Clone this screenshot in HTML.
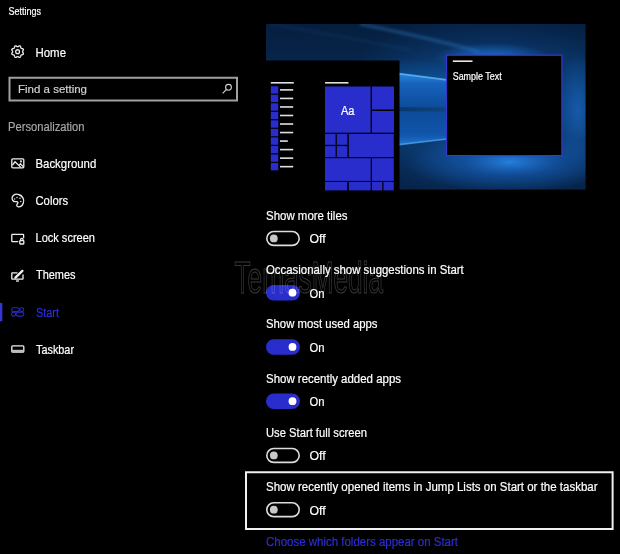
<!DOCTYPE html>
<html><head><meta charset="utf-8">
<style>
html,body{margin:0;padding:0;background:#000;width:620px;height:554px;overflow:hidden}
svg{display:block;will-change:transform}
text{font-family:"Liberation Sans",sans-serif;fill:#fff;stroke:#fff;stroke-width:0.2}
</style></head><body>
<svg width="620" height="554" viewBox="0 0 620 554">
<defs>
  <linearGradient id="wpbase" x1="0" y1="0" x2="0" y2="1">
    <stop offset="0" stop-color="#061f42"/>
    <stop offset="0.35" stop-color="#0a3268"/>
    <stop offset="0.65" stop-color="#0a3670"/>
    <stop offset="1" stop-color="#05214a"/>
  </linearGradient>
  <radialGradient id="glowtop" cx="0.5" cy="0.5" r="0.5">
    <stop offset="0" stop-color="#1f78e0" stop-opacity="0.85"/>
    <stop offset="1" stop-color="#1f78e0" stop-opacity="0"/>
  </radialGradient>
  <radialGradient id="glowbot" cx="0.5" cy="0.5" r="0.5">
    <stop offset="0" stop-color="#2a8cf0" stop-opacity="0.85"/>
    <stop offset="0.45" stop-color="#1a6ad0" stop-opacity="0.45"/>
    <stop offset="1" stop-color="#1a6ad0" stop-opacity="0"/>
  </radialGradient>
  <linearGradient id="rstrip" x1="0" y1="0" x2="0" y2="1">
    <stop offset="0" stop-color="#0c3c80" stop-opacity="0"/>
    <stop offset="0.5" stop-color="#1456a8" stop-opacity="0.6"/>
    <stop offset="1" stop-color="#0c3c80" stop-opacity="0"/>
  </linearGradient>
  <linearGradient id="pane1" x1="0" y1="0" x2="0" y2="1">
    <stop offset="0" stop-color="#2a86dc"/>
    <stop offset="0.3" stop-color="#1662bc"/>
    <stop offset="1" stop-color="#0d4c9c"/>
  </linearGradient>
  <linearGradient id="pane2" x1="0" y1="0" x2="0" y2="1">
    <stop offset="0" stop-color="#0d4a98"/>
    <stop offset="0.7" stop-color="#1056ac"/>
    <stop offset="1" stop-color="#2276cc"/>
  </linearGradient>
  <filter id="blur1" x="-20%" y="-50%" width="140%" height="200%"><feGaussianBlur stdDeviation="0.6"/></filter>
  <filter id="blur2" x="-20%" y="-100%" width="140%" height="300%"><feGaussianBlur stdDeviation="1.5"/></filter>
  <radialGradient id="midglow" cx="0.5" cy="0.5" r="0.5">
    <stop offset="0" stop-color="#1464b0" stop-opacity="0.75"/>
    <stop offset="0.6" stop-color="#0f4e96" stop-opacity="0.45"/>
    <stop offset="1" stop-color="#0f4e96" stop-opacity="0"/>
  </radialGradient>
  <linearGradient id="topdark" x1="0" y1="0" x2="0" y2="1">
    <stop offset="0" stop-color="#020c1e" stop-opacity="0.3"/>
    <stop offset="1" stop-color="#020c1e" stop-opacity="0"/>
  </linearGradient>
  <linearGradient id="botdark" x1="0" y1="0" x2="0" y2="1">
    <stop offset="0" stop-color="#031430" stop-opacity="0"/>
    <stop offset="1" stop-color="#031430" stop-opacity="0.3"/>
  </linearGradient>
  <linearGradient id="abovepane" x1="0" y1="0" x2="0" y2="1">
    <stop offset="0" stop-color="#0a4a8a" stop-opacity="0"/>
    <stop offset="1" stop-color="#0c5298" stop-opacity="0.9"/>
  </linearGradient>
  <clipPath id="wpclip"><rect x="266" y="24" width="319.5" height="165.5"/></clipPath>
</defs>
<rect width="620" height="554" fill="#000"/>

<!-- ===== LEFT NAV ===== -->
<text x="8.4" y="14.5" font-size="10" textLength="32.5" lengthAdjust="spacingAndGlyphs">Settings</text>

<!-- gear -->
<g fill="none" stroke="#ececec" stroke-width="1.3">
  <path d="M17.60 46.72 L17.86 46.68 L18.13 46.57 L18.43 46.39 L18.77 46.13 L19.13 45.96 L19.48 45.88 L19.81 45.90 L20.10 46.02 L20.35 46.24 L20.55 46.55 L20.67 46.92 L20.73 47.34 L20.82 47.68 L20.93 47.95 L21.09 48.16 L21.30 48.32 L21.57 48.43 L21.91 48.52 L22.33 48.58 L22.70 48.70 L23.01 48.90 L23.23 49.15 L23.35 49.44 L23.37 49.77 L23.29 50.12 L23.12 50.48 L22.86 50.82 L22.68 51.12 L22.57 51.39 L22.53 51.65 L22.57 51.91 L22.68 52.18 L22.86 52.48 L23.12 52.82 L23.29 53.18 L23.37 53.53 L23.35 53.86 L23.23 54.15 L23.01 54.40 L22.70 54.60 L22.33 54.72 L21.91 54.78 L21.57 54.87 L21.30 54.98 L21.09 55.14 L20.93 55.35 L20.82 55.62 L20.73 55.96 L20.67 56.38 L20.55 56.75 L20.35 57.06 L20.10 57.28 L19.81 57.40 L19.48 57.42 L19.13 57.34 L18.77 57.17 L18.43 56.91 L18.13 56.73 L17.86 56.62 L17.60 56.58 L17.34 56.62 L17.07 56.73 L16.77 56.91 L16.43 57.17 L16.07 57.34 L15.72 57.42 L15.39 57.40 L15.10 57.28 L14.85 57.06 L14.65 56.75 L14.53 56.38 L14.47 55.96 L14.38 55.62 L14.27 55.35 L14.11 55.14 L13.90 54.98 L13.63 54.87 L13.29 54.78 L12.87 54.72 L12.50 54.60 L12.19 54.40 L11.97 54.15 L11.85 53.86 L11.83 53.53 L11.91 53.18 L12.08 52.82 L12.34 52.48 L12.52 52.18 L12.63 51.91 L12.67 51.65 L12.63 51.39 L12.52 51.12 L12.34 50.82 L12.08 50.48 L11.91 50.12 L11.83 49.77 L11.85 49.44 L11.97 49.15 L12.19 48.90 L12.50 48.70 L12.87 48.58 L13.29 48.52 L13.63 48.43 L13.90 48.32 L14.11 48.16 L14.27 47.95 L14.38 47.68 L14.47 47.34 L14.53 46.92 L14.65 46.55 L14.85 46.24 L15.10 46.02 L15.39 45.90 L15.72 45.88 L16.07 45.96 L16.43 46.13 L16.77 46.39 L17.07 46.57 L17.34 46.68Z"/>
  <circle cx="17.6" cy="51.65" r="1.9"/>
</g>
<text x="35.5" y="56.6" font-size="12.9" textLength="30.5" lengthAdjust="spacingAndGlyphs">Home</text>

<!-- search -->
<rect x="9.5" y="77.75" width="227.5" height="22.75" fill="none" stroke="#a0a0a0" stroke-width="2"/>
<text x="18" y="93" font-size="11.5" style="fill:#d0d0d0;stroke:#d0d0d0" textLength="69" lengthAdjust="spacingAndGlyphs">Find a setting</text>
<g fill="none" stroke="#d0d0d0" stroke-width="1.1">
  <circle cx="228.5" cy="87.3" r="2.9"/>
  <path d="M226.4 89.5 L222.6 93.3"/>
</g>

<text x="8" y="131" font-size="12.5" style="fill:#a6a6a6;stroke:#a6a6a6" textLength="76.5" lengthAdjust="spacingAndGlyphs">Personalization</text>

<!-- background icon -->
<g fill="none" stroke="#f0f0f0" stroke-width="1.3">
  <rect x="11.8" y="158.8" width="12" height="9" rx="1"/>
  <path d="M12.5 165.2 L15 161.8 L20.8 167.4 M19 165.6 L20.4 163.8 L23.2 166.6"/>
  <circle cx="21" cy="161.4" r=".4"/>
</g>
<text x="35.5" y="167.60" font-size="12.9" textLength="60.75" lengthAdjust="spacingAndGlyphs">Background</text>

<!-- colors icon -->
<g fill="none" stroke="#f0f0f0" stroke-width="1.3">
  <path d="M16.2 201.6 C13 202.2 11.6 199.5 12.2 197.3 C13.2 194.2 16.6 193.7 18.6 194.5 C22.6 195.6 24.6 199.6 23.3 203 C22.4 205.6 20.2 207.1 18.3 206.9 C16.2 206.6 16.5 204.6 17.6 203.6 C18.4 202.6 17.7 201.3 16.2 201.6 Z"/>
</g>
<g fill="#e6e6e6">
  <circle cx="17" cy="197.5" r=".75"/><circle cx="20" cy="198.3" r=".75"/>
  <circle cx="14.6" cy="199" r=".75"/><circle cx="20.8" cy="201.5" r=".75"/>
</g>
<text x="35.5" y="204.89" font-size="12.9" textLength="32.5" lengthAdjust="spacingAndGlyphs">Colors</text>

<!-- lock screen icon -->
<g fill="none" stroke="#f0f0f0" stroke-width="1.3">
  <path d="M18.2 241.6 H12.4 Q11.8 241.6 11.8 241 V234.9 Q11.8 234.3 12.4 234.3 H23 Q23.6 234.3 23.6 234.9 V238.2"/>
  <rect x="19.8" y="240.6" width="4" height="3.4" rx=".5"/>
  <path d="M20.6 240.6 V239.6 A1.2 1.2 0 0 1 23 239.6 V240.6"/>
</g>
<text x="35.5" y="242.18" font-size="12.9" textLength="59.5" lengthAdjust="spacingAndGlyphs">Lock screen</text>

<!-- themes icon -->
<g fill="none" stroke="#f0f0f0" stroke-width="1.3">
  <path d="M17.5 272.8 H12.2 Q11.8 272.8 11.8 273.2 V278.8 Q11.8 279.2 12.2 279.2 H22.6 Q23 279.2 23 278.8 V274.5"/>
  <path d="M16 281 H19"/>
</g>
<path d="M15.4 277.6 L22.4 270.9" stroke="#f0f0f0" stroke-width="2.3" stroke-linecap="round"/>
<text x="36" y="279.47" font-size="12.9" textLength="39.5" lengthAdjust="spacingAndGlyphs">Themes</text>

<!-- start (selected) -->
<rect x="0" y="303" width="2.3" height="18.3" fill="#3535d6"/>
<g fill="none" stroke="#2828c0" stroke-width="1.1">
  <rect x="11.6" y="307.8" width="7.6" height="3.8" rx="1.6"/>
  <rect x="19.8" y="307.8" width="3.9" height="3.8" rx="1.6"/>
  <rect x="11.6" y="312.3" width="3.9" height="3.8" rx="1.6"/>
  <rect x="16.1" y="312.3" width="7.6" height="3.8" rx="1.6"/>
</g>
<text x="36" y="316.76" font-size="12.9" style="fill:#2e2ee0;stroke:#2e2ee0" textLength="23" lengthAdjust="spacingAndGlyphs">Start</text>

<!-- taskbar icon -->
<g fill="none" stroke="#f0f0f0" stroke-width="1.3">
  <rect x="11.8" y="345.8" width="12" height="6.4" rx="1"/>
</g>
<rect x="12" y="349.8" width="11.6" height="2.4" fill="#bdbdbd"/>
<text x="36" y="354.05" font-size="12.9" textLength="38" lengthAdjust="spacingAndGlyphs">Taskbar</text>

<!-- ===== PREVIEW ===== -->
<g clip-path="url(#wpclip)">
  <rect x="266" y="24" width="320" height="166" fill="#07264c"/>
  <ellipse cx="495" cy="110" rx="160" ry="105" fill="url(#midglow)"/>
  <rect x="266" y="24" width="319" height="40" fill="url(#topdark)"/>
  <path d="M270 24 Q330 34 410 50" stroke="#2f78c8" stroke-width="2.5" fill="none" opacity="0.12" filter="url(#blur2)"/>
  <path d="M360 24 Q430 38 480 52" stroke="#3a90e0" stroke-width="3" fill="none" opacity="0.35" filter="url(#blur2)"/>
  <ellipse cx="492" cy="58" rx="58" ry="15" fill="url(#glowtop)"/>
  <rect x="266" y="150" width="319" height="40" fill="url(#botdark)"/>
  <ellipse cx="510" cy="162" rx="105" ry="30" fill="url(#glowbot)"/>
  <ellipse cx="578" cy="110" rx="22" ry="55" fill="url(#glowtop)" opacity="0.6"/>
  <polygon points="399,58 447,64 447,80 399,73.5" fill="url(#abovepane)"/>
  <polygon points="399,73.5 447,79.8 447,107.6 399,107.2" fill="url(#pane1)"/>
  <polygon points="399,111.3 447,111.5 447,139.3 399,145" fill="url(#pane2)"/>
  <path d="M399 73.6 L447 79.9" stroke="#6cc4ff" stroke-width="1.6" opacity="0.7" filter="url(#blur1)"/>
  <path d="M399 144.6 L447 139" stroke="#58b0ff" stroke-width="1.6" opacity="0.6" filter="url(#blur1)"/>
</g>
<!-- start menu -->
<rect x="260" y="60.5" width="139.5" height="129.5" fill="#000"/>
<rect x="270.8" y="82" width="23" height="1.6" fill="#e0e0e0"/>
<g fill="#282dcc" id="sq">
  <rect x="270.8" y="86.2" width="7.5" height="7.4"/>
  <rect x="270.8" y="94.73" width="7.5" height="7.4"/>
  <rect x="270.8" y="103.26" width="7.5" height="7.4"/>
  <rect x="270.8" y="111.79" width="7.5" height="7.4"/>
  <rect x="270.8" y="120.32" width="7.5" height="7.4"/>
  <rect x="270.8" y="128.85" width="7.5" height="7.4"/>
  <rect x="270.8" y="137.38" width="7.5" height="7.4"/>
  <rect x="270.8" y="145.91" width="7.5" height="7.4"/>
  <rect x="270.8" y="154.44" width="7.5" height="7.4"/>
  <rect x="270.8" y="162.97" width="7.5" height="7.4"/>
</g>
<g fill="#e0e0e0">
  <rect x="280" y="89.1" width="13.2" height="1.6"/>
  <rect x="280" y="97.63" width="13.2" height="1.6"/>
  <rect x="280" y="106.16" width="13.2" height="1.6"/>
  <rect x="280" y="114.69" width="13.2" height="1.6"/>
  <rect x="280" y="123.22" width="13.2" height="1.6"/>
  <rect x="280" y="131.75" width="13.2" height="1.6"/>
  <rect x="280" y="140.28" width="7.8" height="1.6"/>
  <rect x="280" y="148.81" width="13.2" height="1.6"/>
  <rect x="280" y="157.34" width="13.2" height="1.6"/>
  <rect x="280" y="165.87" width="13.2" height="1.6"/>
</g>
<rect x="325" y="82" width="23.5" height="1.6" fill="#e0e0e0"/>
<g fill="#282dcc">
  <rect x="325" y="86.5" width="45.6" height="46.2"/>
  <rect x="372" y="86.5" width="22" height="23"/>
  <rect x="372" y="111" width="22" height="21.7"/>
  <rect x="325" y="134" width="10.6" height="10.8"/>
  <rect x="336.8" y="134" width="10.6" height="10.8"/>
  <rect x="325" y="146.1" width="10.6" height="11"/>
  <rect x="336.8" y="146.1" width="10.6" height="11"/>
  <rect x="348.8" y="134" width="45" height="23.1"/>
  <rect x="325" y="158.2" width="45.7" height="22.7"/>
  <rect x="372" y="158.2" width="21.8" height="22.7"/>
  <rect x="325" y="182" width="22.1" height="8.4"/>
  <rect x="348.8" y="182" width="21.9" height="8.4"/>
  <rect x="372" y="182" width="10.2" height="8.4"/>
  <rect x="383.5" y="182" width="10.3" height="8.4"/>
</g>
<text x="341" y="114.5" font-size="12.5" textLength="13.5" lengthAdjust="spacingAndGlyphs">Aa</text>

<!-- sample window -->
<rect x="446.6" y="55.2" width="115.3" height="100.4" fill="#000" stroke="#3a34d0" stroke-width="1.2"/>
<rect x="452.8" y="60.4" width="19.7" height="1.6" fill="#e8e8e8"/>
<text x="452.7" y="79.6" font-size="10" textLength="49" lengthAdjust="spacingAndGlyphs">Sample Text</text>

<!-- ===== SETTINGS ===== -->
<g id="settings">
<text x="266" y="219.90" font-size="12.3" textLength="81.5" lengthAdjust="spacingAndGlyphs">Show more tiles</text>
<rect x="266.8" y="231.55" width="32.4" height="13.8" rx="6.9" fill="none" stroke="#dcdcdc" stroke-width="1.6"/>
<circle cx="273.8" cy="238.45" r="3.9" fill="#c8c8c8"/>
<text x="309.5" y="243.40" font-size="12.6" textLength="16.25" lengthAdjust="spacingAndGlyphs">Off</text>
<text x="266" y="274.15" font-size="12.3" textLength="197.75" lengthAdjust="spacingAndGlyphs">Occasionally show suggestions in Start</text>
<rect x="266" y="285.00" width="34" height="15.4" rx="7.7" fill="#282dcc"/>
<circle cx="292.5" cy="292.70" r="3.9" fill="#fff"/>
<text x="309.5" y="297.65" font-size="12.6" textLength="15" lengthAdjust="spacingAndGlyphs">On</text>
<text x="266" y="328.40" font-size="12.3" textLength="111.5" lengthAdjust="spacingAndGlyphs">Show most used apps</text>
<rect x="266" y="339.25" width="34" height="15.4" rx="7.7" fill="#282dcc"/>
<circle cx="292.5" cy="346.95" r="3.9" fill="#fff"/>
<text x="309.5" y="351.90" font-size="12.6" textLength="15" lengthAdjust="spacingAndGlyphs">On</text>
<text x="266" y="382.65" font-size="12.3" textLength="135" lengthAdjust="spacingAndGlyphs">Show recently added apps</text>
<rect x="266" y="393.50" width="34" height="15.4" rx="7.7" fill="#282dcc"/>
<circle cx="292.5" cy="401.20" r="3.9" fill="#fff"/>
<text x="309.5" y="406.15" font-size="12.6" textLength="15" lengthAdjust="spacingAndGlyphs">On</text>
<text x="266" y="436.90" font-size="12.3" textLength="101" lengthAdjust="spacingAndGlyphs">Use Start full screen</text>
<rect x="266.8" y="448.55" width="32.4" height="13.8" rx="6.9" fill="none" stroke="#dcdcdc" stroke-width="1.6"/>
<circle cx="273.8" cy="455.45" r="3.9" fill="#c8c8c8"/>
<text x="309.5" y="460.40" font-size="12.6" textLength="16.25" lengthAdjust="spacingAndGlyphs">Off</text>
<text x="266" y="491.15" font-size="12.3" textLength="331.5" lengthAdjust="spacingAndGlyphs">Show recently opened items in Jump Lists on Start or the taskbar</text>
<rect x="266.8" y="502.80" width="32.4" height="13.8" rx="6.9" fill="none" stroke="#dcdcdc" stroke-width="1.6"/>
<circle cx="273.8" cy="509.70" r="3.9" fill="#c8c8c8"/>
<text x="309.5" y="514.65" font-size="12.6" textLength="16.25" lengthAdjust="spacingAndGlyphs">Off</text>
<rect x="246" y="472.25" width="366.6" height="56.75" fill="none" stroke="#f0f0f0" stroke-width="2"/>
<text x="266" y="545.80" font-size="12.3" style="fill:#2d2dd2;stroke:#2d2dd2" textLength="192" lengthAdjust="spacingAndGlyphs">Choose which folders appear on Start</text>
</g>
<!-- watermark -->
<text x="234.5" y="292.5" font-size="44" textLength="148.5" lengthAdjust="spacingAndGlyphs" style="fill:none;stroke:#fff;stroke-opacity:0.21;stroke-width:1">TemasMedia</text>
</svg>
</body></html>
